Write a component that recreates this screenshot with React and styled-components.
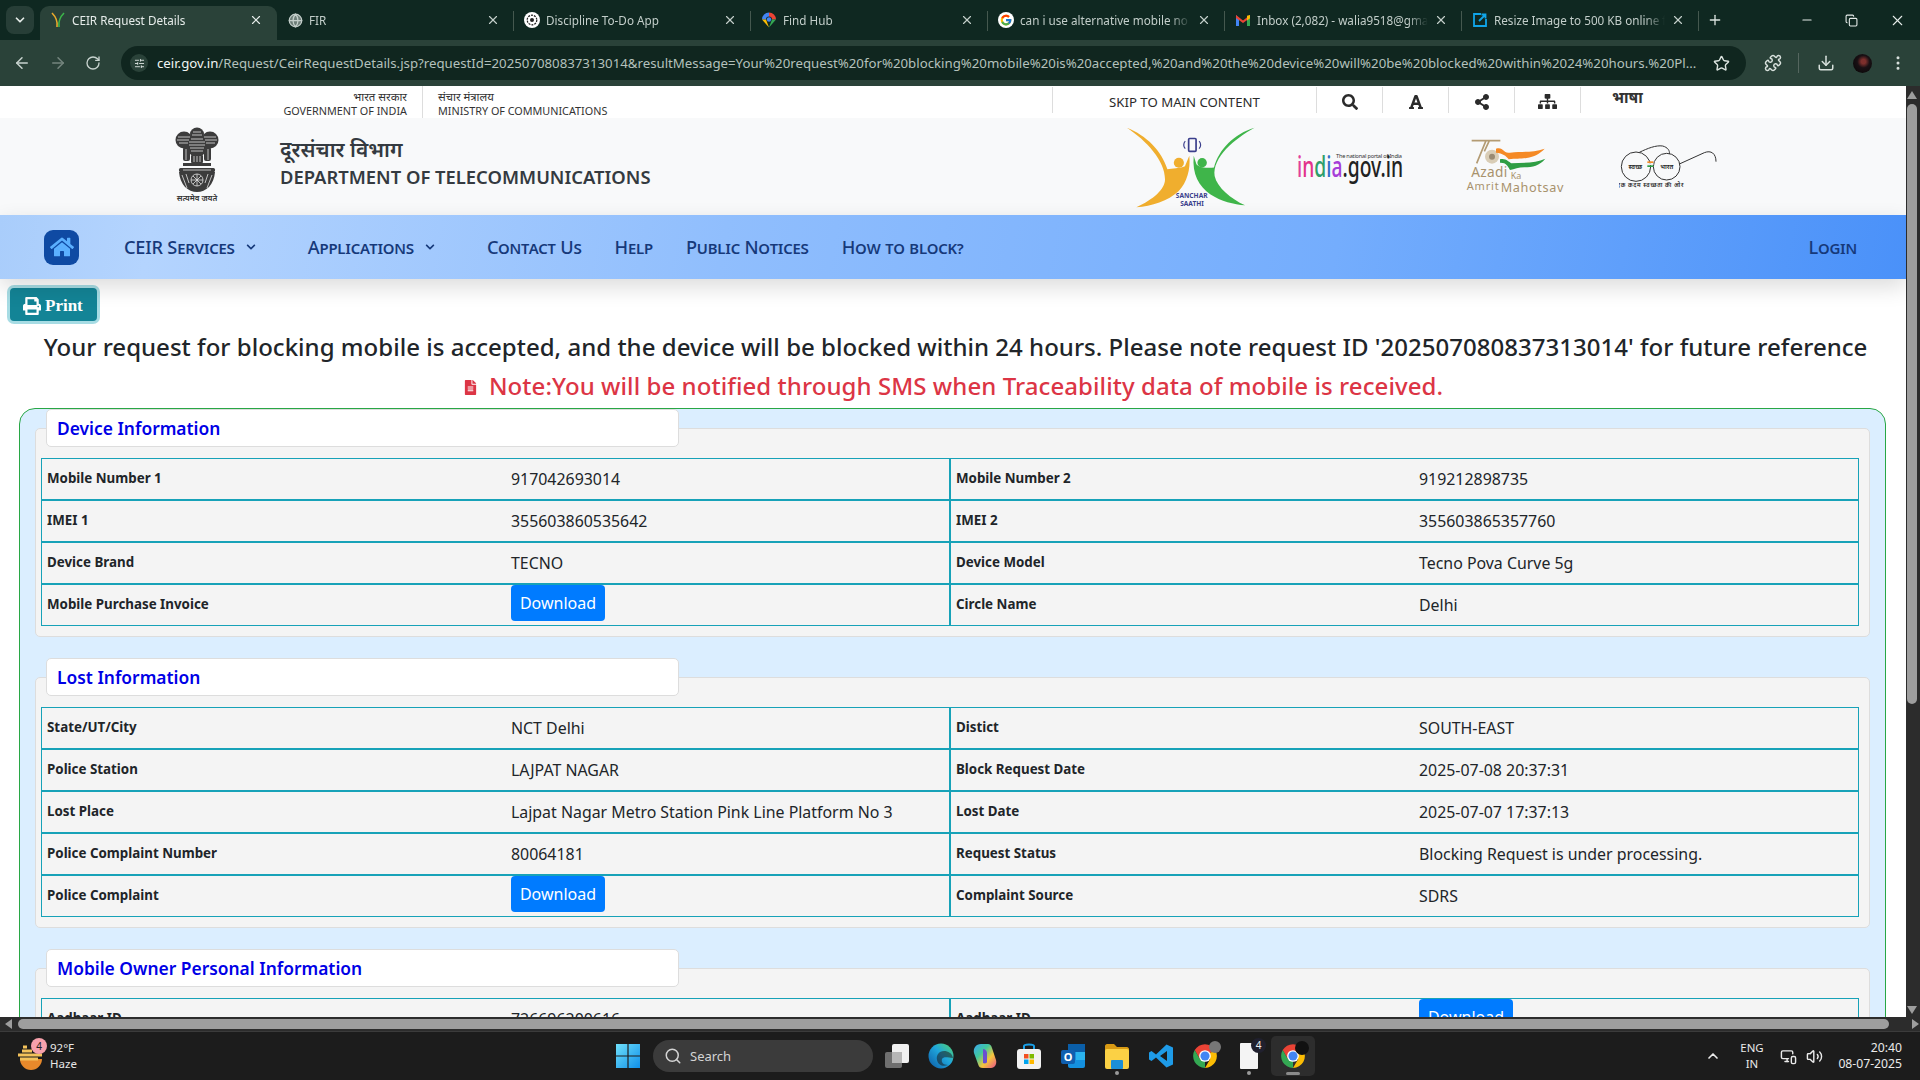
import React from "react";
import styled, { createGlobalStyle } from "styled-components";
import { FaHome, FaPrint, FaFileAlt, FaSearch, FaFont, FaShareAlt, FaSitemap, FaChevronDown } from "react-icons/fa";
import { ArrowLeft, ArrowRight, RotateCw, Globe, X, Plus, Minus, Copy, Star, Puzzle, Download as DownloadIcon, EllipsisVertical, ChevronDown, SlidersHorizontal, Search, ChevronUp, Volume2, MonitorSmartphone } from "lucide-react";

const UI = `"Noto Sans", "Open Sans", sans-serif`;
const HI = `"Noto Sans", "Noto Sans Devanagari", "Lohit Devanagari", "Open Sans", sans-serif`;

const Global = createGlobalStyle`
  html, body { margin: 0; padding: 0; height: 100%; overflow: hidden; background: #fff; }
  #root { height: 1080px; }
  * { box-sizing: border-box; }
`;

const Screen = styled.div`
  width: 1920px; height: 1080px; display: flex; flex-direction: column; overflow: hidden;
  font-family: ${UI}; color: #212529;
`;

/* ---------- browser chrome ---------- */
const TabStrip = styled.div`
  height: 40px; background: #0f2821; display: flex; align-items: flex-end; flex: none; color: #c9d3cf;
`;
const TabMenu = styled.div`
  width: 28px; height: 28px; margin: 0 6px 6px 6px; border-radius: 8px; background: #273e37;
  display: flex; align-items: center; justify-content: center; color: #e4ebe8;
`;
const Tab = styled.div`
  width: 237px; height: 34px; flex: none; display: flex; align-items: center; position: relative;
  padding: 0 14px 6px 10px; gap: 6px; font-size: 11.7px;
  background: ${p => (p.$active ? "#2a4239" : "transparent")};
  color: ${p => (p.$active ? "#e6ecea" : "#c3ceca")};
  border-radius: 9px 9px 0 0;
  &::after {
    content: ""; position: absolute; right: 0; top: 5px; height: 20px; width: 1px;
    background: ${p => (p.$active ? "transparent" : "#45584f")};
  }
`;
const FavSlot = styled.span`width: 16px; height: 16px; flex: none; display: flex; align-items: center; justify-content: center;`;
const TabTitle = styled.span`
  flex: 1; white-space: nowrap; overflow: hidden; min-width: 0;
  -webkit-mask-image: linear-gradient(to right, #000 88%, transparent 100%);
`;
const NewTab = styled.div`width: 32px; height: 34px; padding-bottom: 6px; display: flex; align-items: center; justify-content: center; color: #dbe3df;`;
const WinControls = styled.div`margin-left: auto; height: 40px; display: flex; align-items: center; color: #e6ecea; padding-right: 14px; gap: 31px;`;

const Toolbar = styled.div`
  height: 46px; background: #2a4239; flex: none; display: flex; align-items: center; color: #c8d3cf;
`;
const NavIcons = styled.div`width: 121px; padding-left: 13px; display: flex; align-items: center; gap: 18px; flex: none;`;
const Omnibox = styled.div`
  width: 1625px; height: 34px; border-radius: 17px; background: #10261f; display: flex; align-items: center;
  padding-left: 9px; flex: none;
`;
const SiteChip = styled.span`
  width: 18px; height: 18px; border-radius: 50%; background: #2a4239; display: flex; align-items: center; justify-content: center; color: #dbe3df; flex: none;
`;
const Url = styled.span`
  margin-left: 9px; font-size: 13.24px; color: #b4c1bc; white-space: nowrap; width: 1540px; overflow: hidden; flex: none;
  b { font-weight: 400; color: #f1f5f3; }
`;
const OmniStar = styled.span`margin-left: 16px; color: #dbe3df; display: flex;`;
const ToolRight = styled.div`display: flex; align-items: center; margin-left: 18px; color: #d7e0dc;`;
const ToolSep = styled.span`width: 1px; height: 20px; background: #55665f; margin: 0 18px 0 16px;`;
const Avatar = styled.span`width: 19px; height: 19px; border-radius: 50%; margin: 0 0 0 18px; background: radial-gradient(circle at 55% 40%, #7d2f2c 0 14%, #191014 40%, #050505 100%); flex: none;`;
const Kebab = styled.span`margin-left: 17px; display: flex;`;

/* ---------- page ---------- */
const Viewport = styled.div`flex: 1; min-height: 0; display: flex; background: #fff; overflow: hidden;`;
const Page = styled.div`width: 1906px; flex: none; overflow: hidden; position: relative;`;

const VBar = styled.div`width: 14px; background: #2c2c2c; display: flex; flex-direction: column; align-items: center; flex: none; padding: 5px 3px 0 1px;`;
const VThumb = styled.div`width: 10px; height: 600px; border-radius: 5px; background: #9e9e9e; margin-top: 5px;`;
const ArrowUp = styled.span`width: 0; height: 0; border-left: 5px solid transparent; border-right: 5px solid transparent; border-bottom: 8px solid #9e9e9e;`;
const ArrowDown = styled.span`width: 0; height: 0; border-left: 5px solid transparent; border-right: 5px solid transparent; border-top: 8px solid #9e9e9e; margin-top: auto; margin-bottom: 3px;`;

const HBar = styled.div`height: 15px; flex: none; background: #2c2c2c; display: flex; align-items: center; padding: 0 18px 0 5px; border-bottom: 1px solid #3b3b3b;`;
const ArrowL = styled.span`width: 0; height: 0; border-top: 5px solid transparent; border-bottom: 5px solid transparent; border-right: 7px solid #9e9e9e; margin-right: 6px; flex: none;`;
const ArrowR = styled.span`width: 0; height: 0; border-top: 5px solid transparent; border-bottom: 5px solid transparent; border-left: 7px solid #9e9e9e; margin-left: 23px; margin-right: -17px; flex: none;`;
const HThumb = styled.div`flex: 1; height: 10px; border-radius: 5px; background: #9e9e9e;`;

const UtilBar = styled.div`height: 32px; display: flex; justify-content: space-between; background: #fff;`;
const UtilLeft = styled.div`display: flex; padding-left: 250px;`;
const GovBlock = styled.div`
  width: ${p => p.$w}px; font-size: 10.8px; line-height: 14px; padding-top: 4px; color: #333; white-space: nowrap;
  text-align: ${p => p.$align}; padding-right: ${p => (p.$align === "right" ? 15 : 0)}px; padding-left: ${p => (p.$align === "left" ? 15 : 0)}px;
  border-right: ${p => (p.$sep ? "1px solid #ddd" : "0")};
  span { display: block; font-family: ${HI}; font-size: 11.4px; }
`;
const UtilRight = styled.div`display: flex;`;
const UtilCell = styled.div`
  width: ${p => p.$w}px; height: 26px; margin-top: 1px; border-left: 1px solid #ddd; display: flex; align-items: center;
  justify-content: center; color: #2b2b2b; font-size: 13.2px; padding-top: 3px;
`;
const LangCell = styled.div`
  width: 326px; height: 26px; margin-top: 1px; border-left: 1px solid #ddd; padding-left: 31px; font-weight: 700; font-size: 15.4px;
  line-height: 22px; color: #333; font-family: ${HI};
`;

const Header = styled.div`height: 97px; background: #f8f9fa; display: flex; align-items: flex-start; padding: 9px 185px 0 174px;`;
const Emblem = styled.svg`flex: none;`;
const TitleBlock = styled.div`margin-left: 60px; padding-top: 8px;`;
const HindiTitle = styled.div`font-family: ${HI}; font-size: 21px; line-height: 29px; font-weight: 600; color: #343a40;`;
const EngTitle = styled.div`font-size: 18.4px; line-height: 26px; font-weight: 600; color: #343a40; white-space: nowrap;`;
const Logos = styled.div`margin-left: auto; display: flex; align-items: flex-start;`;
const Logo = styled.svg`flex: none; margin-left: ${p => p.$ml || 0}px; margin-top: ${p => p.$mt || 0}px;`;

const Nav = styled.nav`
  height: 64px; display: flex; align-items: center; padding: 0 49px 0 44px; gap: 33px; position: relative;
  background: linear-gradient(100deg, #a9cdfb 0%, #b4d4fe 8%, #90befd 38%, #74adfd 70%, #4a91f9 100%);
  box-shadow: 0 8px 22px rgba(0,0,0,.14);
`;
const HomeBadge = styled.span`
  width: 35px; height: 35px; border-radius: 9px; background: #0f4aa3; color: #5bb0ff; display: flex; align-items: center; justify-content: center;
  margin-right: 12px; flex: none;
`;
const NavLink = styled.span`
  font-size: 18.2px; font-variant: small-caps; color: #16397a; font-weight: 500; white-space: nowrap; display: flex; align-items: center; gap: 11px;
  margin-right: ${p => p.$mr || 0}px; margin-left: ${p => (p.$end ? "auto" : 0)};
  letter-spacing: -.2px;
`;

const PrintRow = styled.div`padding: 9px 0 0 10px; height: 44px;`;
const PrintBtn = styled.button`
  width: 87px; height: 33px; border: 0; border-radius: 4px; background: #138496; color: #fff; box-shadow: 0 0 0 3px rgba(23,162,184,.38);
  display: flex; align-items: center; padding: 2px 0 0 13px; gap: 4px;
  font-family: "Liberation Serif", serif; font-weight: 700; font-size: 17px;
`;
const Message = styled.h4`
  margin: 0; padding: 7px 0 0 5px; text-align: center; font-size: 24px; line-height: 33px; font-weight: 500; color: #212529; white-space: nowrap; letter-spacing: 0.02px;
`;
const Note = styled.h4`
  margin: 0; padding-top: 6px; text-align: center; font-size: 24px; line-height: 33px; font-weight: 500; color: #dc3545; white-space: nowrap; letter-spacing: .07px;
  display: flex; justify-content: center; align-items: center; gap: 11px;
  svg { margin-top: 4px; }
`;
const Outer = styled.div`
  margin: 6px 20px 0 19px; border: 1px solid #28a745; border-radius: 16px; background: #dbeeff; padding: 19px 15px 40px 15px;
  & > section + section { margin-top: 40px; }
`;
const Card = styled.section`border: 1px solid #ddd; border-radius: 5px; background: #f4f4f4; padding: 0 10px 10px 5px;`;
const Legend = styled.div`
  margin: -20px 0 11px 5px; width: 633px; height: 38px; background: #fff; border: 1px solid #ddd; border-radius: 5px;
  color: #0000e6; font-size: 17.4px; font-weight: 600; padding-left: 10px; line-height: 37px;
`;
const Table = styled.div`border: 1px solid #17a2b8;`;
const Row = styled.div`
  display: grid; grid-template-columns: 464px 443px 465px 1fr; height: ${p => (p.$first ? 40 : 42)}px;
  border-top: ${p => (p.$first ? "0" : "2px solid #17a2b8")};
`;
const Label = styled.div`
  font-size: 13.35px; line-height: 20px; font-weight: 700; padding: 8.5px 0 0 5px; color: #212529;
  border-left: ${p => (p.$mid ? "2px solid #17a2b8" : "0")};
`;
const Value = styled.div`font-size: 15.9px; line-height: 24px; padding: ${p => (p.$flush ? "0" : "8px")} 0 0 5px; color: #212529; white-space: nowrap;`;
const DownloadBtn = styled.button`
  width: 94px; height: 36px; background: #007bff; color: #fff; border: 0; border-radius: 4px; font-family: ${UI}; font-size: 16px; padding: 0; display: block;
`;

/* ---------- taskbar ---------- */
const Taskbar = styled.div`height: 48px; background: #1c1c1c; display: flex; align-items: center; color: #e8e8e8; flex: none; position: relative;`;
const Weather = styled.div`width: 606px; padding-left: 18px; display: flex; align-items: center; gap: 8px; flex: none;`;
const WeatherIcon = styled.span`position: relative; width: 24px; height: 30px; display: block; flex: none;`;
const Badge = styled.span`
  position: absolute; width: ${p => p.$s || 14}px; height: ${p => p.$s || 14}px; border-radius: 50%; top: ${p => p.$t}px; right: ${p => p.$r}px;
  background: ${p => p.$bg}; color: ${p => p.$c}; font-size: 10px; line-height: ${p => p.$s || 14}px; text-align: center;
`;
const WeatherText = styled.div`font-size: 11.5px; line-height: 16px; color: #e6e6e6;`;
const Slot = styled.span`
  width: 44px; height: 40px; flex: none; display: flex; align-items: center; justify-content: center; position: relative; border-radius: 5px;
  background: ${p => (p.$active ? "#2d2d2d" : "transparent")};
  &::after {
    content: ""; position: absolute; bottom: 1px; left: 50%; transform: translateX(-50%); border-radius: 2px; background: ${p => (p.$active ? "#8a8a8a" : "#9a9a9a")};
    width: ${p => (p.$active ? 14 : p.$dot ? 4 : 0)}px; height: ${p => (p.$active ? 3 : p.$dot ? 4 : 0)}px;
  }
`;
const SearchPill = styled.div`
  width: 220px; height: 32px; border-radius: 16px; background: #3b3b3b; margin: 0 2px 0 3px; display: flex; align-items: center; gap: 8px; padding-left: 11px;
  font-size: 13px; color: #d4d4d4; flex: none;
`;
const Tray = styled.div`margin-left: auto; padding-right: 18px; display: flex; align-items: center; color: #eaeaea;`;
const Lang = styled.div`font-size: 11.4px; line-height: 16px; text-align: center; width: 30px; margin: 0 13px 0 16px;`;
const Clock = styled.div`font-size: 12.2px; line-height: 16px; text-align: right; margin-left: 11px; width: 68px; white-space: nowrap;`;
const TrayIcon = styled.span`display: flex; margin-left: ${p => p.$ml || 0}px;`;

/* ---------- drawings ---------- */
const ChromeLogo = ({ s = 16 }) => (
  <svg width={s} height={s} viewBox="0 0 24 24">
    <path d="M12 12L21.5 6.5A11 11 0 0 0 2.5 6.5L7.2 14.8Z" fill="#ea4335" />
    <path d="M12 12L21.5 6.5A11 11 0 0 1 12 23L16.8 14.8Z" fill="#fbbc04" />
    <path d="M12 12L12 23A11 11 0 0 1 2.5 6.5L7.2 14.8Z" fill="#34a853" />
    <circle cx="12" cy="12" r="5.4" fill="#fff" /><circle cx="12" cy="12" r="4.2" fill="#4285f4" />
  </svg>
);
const GoogleLogo = () => (
  <svg width="16" height="16" viewBox="0 0 48 48">
    <circle cx="24" cy="24" r="24" fill="#fff" />
    <g transform="translate(5 5) scale(.8)">
      <path fill="#FFC107" d="M43.611 20.083H42V20H24v8h11.303c-1.649 4.657-6.08 8-11.303 8-6.627 0-12-5.373-12-12s5.373-12 12-12c3.059 0 5.842 1.154 7.961 3.039l5.657-5.657C34.046 6.053 29.268 4 24 4 12.955 4 4 12.955 4 24s8.955 20 20 20 20-8.955 20-20c0-1.341-.138-2.65-.389-3.917z" />
      <path fill="#FF3D00" d="M6.306 14.691l6.571 4.819C14.655 15.108 18.961 12 24 12c3.059 0 5.842 1.154 7.961 3.039l5.657-5.657C34.046 6.053 29.268 4 24 4 16.318 4 9.656 8.337 6.306 14.691z" />
      <path fill="#4CAF50" d="M24 44c5.166 0 9.86-1.977 13.409-5.192l-6.19-5.238C29.211 35.091 26.715 36 24 36c-5.202 0-9.619-3.317-11.283-7.946l-6.522 5.025C9.505 39.556 16.227 44 24 44z" />
      <path fill="#1976D2" d="M43.611 20.083H42V20H24v8h11.303c-.792 2.237-2.231 4.166-4.087 5.571l6.19 5.238C36.971 39.205 44 34 44 24c0-1.341-.138-2.65-.389-3.917z" />
    </g>
  </svg>
);
const CeirFav = () => (
  <svg width="16" height="16" viewBox="0 0 16 16" fill="none">
    <path d="M2 1C5 4 8 8 7 15" stroke="#e9a92c" strokeWidth="1.6" />
    <path d="M14 1C11 4 8 8 9 15" stroke="#3cb54a" strokeWidth="1.6" />
  </svg>
);
const DisciplineFav = () => (
  <svg width="16" height="16" viewBox="0 0 16 16">
    <circle cx="8" cy="8" r="8" fill="#fff" />
    <circle cx="8" cy="8" r="4.8" fill="none" stroke="#222" strokeWidth="1.2" strokeDasharray="2 1" />
    <circle cx="8" cy="8" r="2" fill="#222" />
  </svg>
);
const GmailFav = () => (
  <svg width="16" height="16" viewBox="0 0 16 16">
    <path d="M1 3V14H4V6.5Z" fill="#4285f4" /><path d="M15 3V14H12V6.5Z" fill="#34a853" />
    <path d="M1 3L8 8.5L15 3V6L8 11L1 6Z" fill="#ea4335" /><path d="M12 3.8L15 3V6.2L12 8.4Z" fill="#fbbc04" />
  </svg>
);
const ResizeFav = () => (
  <svg width="16" height="16" viewBox="0 0 16 16" fill="none" stroke="#10a5e8" strokeWidth="1.8">
    <path d="M9 2H2V14H14V7" /><path d="M7 9L13 3M9.5 2.5H13.5V6.5" />
  </svg>
);
const FindHubFav = () => (
  <svg width="16" height="16" viewBox="0 0 16 16">
    <path d="M8 0.5A7 7 0 0 1 15 7.5H11A3 3 0 0 0 8 4.5Z" fill="#ea4335" />
    <path d="M1 7.5A7 7 0 0 1 8 0.5V4.5A3 3 0 0 0 5 7.5Z" fill="#4285f4" />
    <path d="M1 7.5H5L8 15.5Z" fill="#fbbc04" /><path d="M15 7.5H11L8 15.5Z" fill="#34a853" />
    <circle cx="8" cy="7.5" r="2.2" fill="#4285f4" />
  </svg>
);

const LionEmblem = () => (
  <Emblem width="46" height="76" viewBox="0 0 46 76">
    <g fill="#3c3c3c">
      <ellipse cx="23" cy="7" rx="7" ry="6.5" /><ellipse cx="10" cy="13" rx="8.5" ry="8.5" /><ellipse cx="36" cy="13" rx="8.5" ry="8.5" />
      <ellipse cx="23" cy="19" rx="10" ry="11" /><rect x="9" y="20" width="7" height="14" rx="2" /><rect x="30" y="20" width="7" height="14" rx="2" />
      <rect x="17" y="28" width="12" height="8" rx="1" />
      <rect x="9" y="36" width="28" height="3" /><rect x="5" y="41" width="36" height="4" rx="1.5" />
      <path d="M5 45C6 58 14 65 23 65C32 65 40 58 41 45Z" />
    </g>
    <g fill="none" stroke="#fff" strokeWidth=".8" opacity=".85">
      <path d="M4 10H16M3 13H15M5 16H14M30 10H42M31 13H43M32 16H41M17 12H29M15 15H31M15 18H31M16 21H30M17 24H29M19 5H27M18 8H28" />
      <path d="M12 22V33M34 22V33M20 29V35M26 29V35M23 29V35" />
      <circle cx="23" cy="53" r="6" /><path d="M23 47V59M17 53H29M19 49L27 57M27 49L19 57" />
      <path d="M8 48L13 61M38 48L33 61M12 47L15 56M34 47L31 56M9 43H37" />
    </g>
    <text x="23" y="74" textAnchor="middle" fontFamily={HI} fontSize="8" fontWeight="600" fill="#333">सत्यमेव जयते</text>
  </Emblem>
);

const SancharLogo = () => (
  <Logo width="129" height="81" viewBox="110 50 381 240">
    <path fill="#f0ae2e" d="M112 52C170 75 215 120 232 175C245 172 270 172 284 166L297 135C301 175 290 215 265 240C235 268 185 285 140 288C190 265 225 235 225 205C225 150 170 90 112 52Z" />
    <circle cx="266" cy="156" r="15" fill="#f0ae2e" />
    <path fill="#3fb54a" d="M490 52C430 70 385 115 370 170C358 172 328 172 318 160L310 135C305 190 325 225 360 250C390 270 430 280 462 282C420 262 380 230 372 195C365 140 430 85 490 52Z" />
    <circle cx="335" cy="156" r="14" fill="#3fb54a" />
    <rect x="295" y="84" width="22" height="38" rx="3" fill="none" stroke="#3b3f8c" strokeWidth="5" />
    <path d="M285 92C279 98 279 108 285 114M326 92C332 98 332 108 326 114" fill="none" stroke="#3b3f8c" strokeWidth="3.5" />
    <text x="304" y="260" textAnchor="middle" fontFamily={UI} fontWeight="700" fontSize="21" fill="#3b3f8c" textLength="94" lengthAdjust="spacingAndGlyphs">SANCHAR</text>
    <text x="305" y="285" textAnchor="middle" fontFamily={UI} fontWeight="700" fontSize="21" fill="#3b3f8c" textLength="70" lengthAdjust="spacingAndGlyphs">SAATHI</text>
  </Logo>
);
const IndiaLogo = () => (
  <Logo $ml={41} $mt={24} width="109" height="36" viewBox="0 0 109 36">
    <text x="40" y="7" fontFamily={UI} fontSize="5.6" fill="#333" textLength="66">The national portal of India</text>
    <text x="1" y="26" fontFamily={UI} fontSize="29" fontWeight="500" textLength="106" lengthAdjust="spacingAndGlyphs">
      <tspan fill="#e23f9c">i</tspan><tspan fill="#e2338a">n</tspan><tspan fill="#2e9e6b">d</tspan><tspan fill="#2f6fc6">i</tspan><tspan fill="#a63fd8">a</tspan><tspan fill="#222">.gov.in</tspan>
    </text>
  </Logo>
);
const AzadiLogo = () => (
  <Logo $ml={61} $mt={12} width="100" height="56" viewBox="80 55 300 168">
    <path d="M97 60H140L112 128M130 60H183M150 60L135 92" fill="none" stroke="#b39b73" strokeWidth="5" />
    <circle cx="158" cy="108" r="21" fill="#d9cdb6" /><circle cx="158" cy="108" r="9" fill="#9a8b73" />
    <path d="M170 84C195 78 190 100 212 96C250 92 280 96 316 84C300 100 285 108 262 112C240 116 230 112 208 116C200 105 190 98 170 96Z" fill="#f58a25" />
    <path d="M182 116C200 112 208 124 216 128C250 126 290 128 318 114C300 135 280 140 255 140C238 140 225 146 212 148C205 135 200 125 182 126Z" fill="#2f9e44" />
    <g fontFamily={UI} fill="#a8926c">
      <text x="96" y="168" fontSize="41" textLength="108">Azadi</text><text x="214" y="176" fontSize="27">Ka</text>
      <text x="82" y="207" fontSize="33" textLength="96">Amrit</text><text x="184" y="215" fontSize="38" textLength="188">Mahotsav</text>
    </g>
  </Logo>
);
const SwachhLogo = () => (
  <Logo $ml={53} $mt={17} width="102" height="48" viewBox="540 72 304 144">
    <g fill="none" stroke="#333" strokeWidth="3">
      <circle cx="590" cy="140" r="44" /><circle cx="682" cy="140" r="40" />
      <path d="M600 97C625 85 650 75 670 78C685 82 692 92 690 102M720 132L795 98C815 90 830 100 830 125" />
    </g>
    <rect x="624" y="124" width="18" height="5" fill="#f58a25" /><rect x="624" y="130" width="18" height="5" fill="#eee" /><rect x="624" y="136" width="18" height="5" fill="#2f9e44" />
    <g fontFamily={HI} fill="#222" fontWeight="600">
      <text x="588" y="148" fontSize="19" textAnchor="middle">स्वच्छ</text>
      <text x="682" y="148" fontSize="19" textAnchor="middle">भारत</text>
      <text x="632" y="202" fontSize="17" textAnchor="middle" textLength="200">एक कदम स्वच्छता की ओर</text>
    </g>
  </Logo>
);

const WinLogo = () => (
  <svg width="24" height="24" viewBox="0 0 24 24">
    <defs><linearGradient id="wg" x1="0" y1="0" x2="1" y2="1"><stop offset="0" stopColor="#6fe0fb" /><stop offset="1" stopColor="#0f8fe8" /></linearGradient></defs>
    <path d="M0 0H11.4V11.4H0ZM12.6 0H24V11.4H12.6ZM0 12.6H11.4V24H0ZM12.6 12.6H24V24H12.6Z" fill="url(#wg)" />
  </svg>
);
const TaskView = () => (
  <svg width="26" height="26" viewBox="0 0 26 26">
    <rect x="1" y="9" width="17" height="16" rx="2" fill="#6f6f6f" /><rect x="8" y="1" width="17" height="19" rx="2" fill="#f0f0f0" /><rect x="8" y="9" width="10" height="11" fill="#b6b6b6" />
  </svg>
);
const EdgeLogo = () => (
  <svg width="26" height="26" viewBox="0 0 26 26">
    <defs><linearGradient id="eg" x1="0" y1="1" x2="1" y2="0"><stop offset="0" stopColor="#0c59a4" /><stop offset=".55" stopColor="#1fa6dc" /><stop offset="1" stopColor="#54d469" /></linearGradient></defs>
    <circle cx="13" cy="13" r="12.5" fill="url(#eg)" />
    <path d="M25 15C24 10 20 8 16 8C11 8 8 12 9 17C10 22 15 24 20 22C15 22 13 19 14 16C15 14 18 14 25 15Z" fill="#1c1c1c" opacity=".55" />
  </svg>
);
const CopilotLogo = () => (
  <svg width="24" height="26" viewBox="0 0 24 26">
    <defs><linearGradient id="cg" x1="0" y1="0" x2="1" y2="1"><stop offset="0" stopColor="#3da5f0" /><stop offset=".35" stopColor="#40c99e" /><stop offset=".65" stopColor="#f6c63c" /><stop offset="1" stopColor="#e8508a" /></linearGradient></defs>
    <path d="M8 1H15C17 1 18 2 19 5L23 17C24 21 22 25 18 25H10C7 25 6 24 5 21L1 10C0 5 3 1 8 1Z" fill="url(#cg)" />
    <path d="M10 6C12 6 14 8 14 10L14 19C14 20 12 21 10 20Z" fill="#6a4fd0" />
  </svg>
);
const StoreLogo = () => (
  <svg width="24" height="26" viewBox="0 0 24 26">
    <path d="M7 7V3C7 1 17 1 17 3V7" fill="none" stroke="#1aa0e8" strokeWidth="2" />
    <rect x="0" y="6" width="24" height="20" rx="3" fill="#f2f2f2" />
    <rect x="7" y="11" width="4.5" height="4.5" fill="#f25022" /><rect x="12.5" y="11" width="4.5" height="4.5" fill="#7fba00" />
    <rect x="7" y="16.5" width="4.5" height="4.5" fill="#00a4ef" /><rect x="12.5" y="16.5" width="4.5" height="4.5" fill="#ffb900" />
  </svg>
);
const OutlookLogo = () => (
  <svg width="26" height="26" viewBox="0 0 26 26">
    <rect x="8" y="1" width="17" height="24" rx="2" fill="#1490df" /><rect x="8" y="1" width="17" height="8" fill="#0a5ea8" /><rect x="16" y="9" width="9" height="8" fill="#2ab3ee" />
    <rect x="1" y="7" width="14" height="14" rx="2" fill="#0f5fb0" />
    <text x="8" y="18" textAnchor="middle" fontFamily={UI} fontWeight="700" fontSize="11" fill="#fff">O</text>
  </svg>
);
const FolderLogo = () => (
  <svg width="24" height="26" viewBox="0 0 24 26">
    <path d="M0 3C0 2 1 1 2 1H9L12 4H22C23 4 24 5 24 6V9H0Z" fill="#d99a14" />
    <rect x="0" y="6" width="24" height="20" rx="2" fill="#fbd145" />
    <rect x="6" y="17" width="12" height="9" rx="1" fill="#1b8fd6" />
  </svg>
);
const VsCodeLogo = () => (
  <svg width="24" height="24" viewBox="0 0 24 24">
    <path d="M17.5 0.5L24 3.5V20.5L17.5 23.5L7 13.5L2.5 17L0 15.5V8.5L2.5 7L7 10.5ZM18 7L11 12L18 17Z" fill="#1e9be8" fillRule="evenodd" />
  </svg>
);
const BlankDoc = () => <svg width="18" height="26" viewBox="0 0 18 26"><rect width="18" height="26" rx="1" fill="#f4f4f4" /></svg>;

const StackedChrome = ({ badge }) => (
  <>
    <ChromeLogo s={26} />
    <Badge $t={5} $r={6} $s={badge === "g" ? 12 : 14} $bg={badge === "g" ? "#777" : "#111"} $c="#ddd" />
  </>
);

const tabs = [
  { title: "CEIR Request Details", icon: <CeirFav />, active: true },
  { title: "FIR", icon: <Globe size={15} color="#c3ceca" fill="#6c7d77" /> },
  { title: "Discipline To-Do App", icon: <DisciplineFav /> },
  { title: "Find Hub", icon: <FindHubFav /> },
  { title: "can i use alternative mobile no for blocking", icon: <GoogleLogo /> },
  { title: "Inbox (2,082) - walia9518@gmail.com", icon: <GmailFav /> },
  { title: "Resize Image to 500 KB online free", icon: <ResizeFav /> },
];

const sections = [
  {
    title: "Device Information",
    rows: [
      ["Mobile Number 1", "917042693014", "Mobile Number 2", "919212898735"],
      ["IMEI 1", "355603860535642", "IMEI 2", "355603865357760"],
      ["Device Brand", "TECNO", "Device Model", "Tecno Pova Curve 5g"],
      ["Mobile Purchase Invoice", null, "Circle Name", "Delhi"],
    ],
  },
  {
    title: "Lost Information",
    rows: [
      ["State/UT/City", "NCT Delhi", "Distict", "SOUTH-EAST"],
      ["Police Station", "LAJPAT NAGAR", "Block Request Date", "2025-07-08 20:37:31"],
      ["Lost Place", "Lajpat Nagar Metro Station Pink Line Platform No 3", "Lost Date", "2025-07-07 17:37:13"],
      ["Police Complaint Number", "80064181", "Request Status", "Blocking Request is under processing."],
      ["Police Complaint", null, "Complaint Source", "SDRS"],
    ],
  },
  {
    title: "Mobile Owner Personal Information",
    rows: [["Aadhaar ID", "726696200616", "Aadhaar ID", null]],
  },
];

const Cell = ({ v }) =>
  v === null ? (
    <Value $flush><DownloadBtn>Download</DownloadBtn></Value>
  ) : (
    <Value>{v}</Value>
  );

export default function App() {
  return (
    <Screen>
      <Global />
      <TabStrip>
        <TabMenu><ChevronDown size={14} strokeWidth={3} /></TabMenu>
        {tabs.map(t => (
          <Tab key={t.title} $active={t.active}>
            <FavSlot>{t.icon}</FavSlot>
            <TabTitle>{t.title}</TabTitle>
            <X size={14} strokeWidth={2} />
          </Tab>
        ))}
        <NewTab><Plus size={16} /></NewTab>
        <WinControls>
          <Minus size={14} /><Copy size={13} /><X size={17} strokeWidth={1.5} />
        </WinControls>
      </TabStrip>
      <Toolbar>
        <NavIcons>
          <ArrowLeft size={18} /><ArrowRight size={18} color="#74857e" /><RotateCw size={16} />
        </NavIcons>
        <Omnibox>
          <SiteChip><SlidersHorizontal size={11} /></SiteChip>
          <Url><b>ceir.gov.in</b>/Request/CeirRequestDetails.jsp?requestId=202507080837313014&amp;resultMessage=Your%20request%20for%20blocking%20mobile%20is%20accepted,%20and%20the%20device%20will%20be%20blocked%20within%2024%20hours.%20Pl...</Url>
          <OmniStar><Star size={17} /></OmniStar>
        </Omnibox>
        <ToolRight>
          <Puzzle size={18} />
          <ToolSep />
          <DownloadIcon size={18} />
          <Avatar />
          <Kebab><EllipsisVertical size={18} /></Kebab>
        </ToolRight>
      </Toolbar>

      <Viewport>
        <Page>
          <UtilBar>
            <UtilLeft>
              <GovBlock $w={173} $align="right" $sep><span>भारत सरकार</span>GOVERNMENT OF INDIA</GovBlock>
              <GovBlock $w={220} $align="left"><span>संचार मंत्रालय</span>MINISTRY OF COMMUNICATIONS</GovBlock>
            </UtilLeft>
            <UtilRight>
              <UtilCell $w={264}>SKIP TO MAIN CONTENT</UtilCell>
              <UtilCell $w={66}><FaSearch size={16} /></UtilCell>
              <UtilCell $w={66}><FaFont size={16} /></UtilCell>
              <UtilCell $w={66}><FaShareAlt size={16} /></UtilCell>
              <UtilCell $w={66}><FaSitemap size={19} /></UtilCell>
              <LangCell>भाषा</LangCell>
            </UtilRight>
          </UtilBar>

          <Header>
            <LionEmblem />
            <TitleBlock>
              <HindiTitle>दूरसंचार विभाग</HindiTitle>
              <EngTitle>DEPARTMENT OF TELECOMMUNICATIONS</EngTitle>
            </TitleBlock>
            <Logos>
              <SancharLogo /><IndiaLogo /><AzadiLogo /><SwachhLogo />
            </Logos>
          </Header>

          <Nav>
            <HomeBadge><FaHome size={24} /></HomeBadge>
            <NavLink $mr={19}>CEIR Services <FaChevronDown size={10} /></NavLink>
            <NavLink $mr={19}>Applications <FaChevronDown size={10} /></NavLink>
            <NavLink>Contact Us</NavLink>
            <NavLink>Help</NavLink>
            <NavLink>Public Notices</NavLink>
            <NavLink>How to block?</NavLink>
            <NavLink $end>Login</NavLink>
          </Nav>

          <PrintRow>
            <PrintBtn><FaPrint size={18} />Print</PrintBtn>
          </PrintRow>
          <Message>Your request for blocking mobile is accepted, and the device will be blocked within 24 hours. Please note request ID '202507080837313014' for future reference</Message>
          <Note><FaFileAlt size={15} />Note:You will be notified through SMS when Traceability data of mobile is received.</Note>

          <Outer>
            {sections.map(s => (
              <Card key={s.title}>
                <Legend>{s.title}</Legend>
                <Table>
                  {s.rows.map((r, i) => (
                    <Row key={r[0]} $first={i === 0}>
                      <Label>{r[0]}</Label>
                      <Cell v={r[1]} />
                      <Label $mid>{r[2]}</Label>
                      <Cell v={r[3]} />
                    </Row>
                  ))}
                </Table>
              </Card>
            ))}
          </Outer>
        </Page>
        <VBar>
          <ArrowUp />
          <VThumb />
          <ArrowDown />
        </VBar>
      </Viewport>

      <HBar>
        <ArrowL /><HThumb /><ArrowR />
      </HBar>

      <Taskbar>
        <Weather>
          <WeatherIcon>
            <svg width="24" height="30" viewBox="0 0 24 30">
              <path d="M2 18H24A11 11 0 0 1 2 18Z" fill="#e8892b" />
              <path d="M4 10H14M0 14H24M2 18H20M5 6H9" stroke="#f3c25b" strokeWidth="3" />
            </svg>
            <Badge $t={-3} $r={-5} $s={16} $bg="#f7a1ac" $c="#222">4</Badge>
          </WeatherIcon>
          <WeatherText>92°F<br />Haze</WeatherText>
        </Weather>
        <Slot><WinLogo /></Slot>
        <SearchPill><Search size={18} />Search</SearchPill>
        <Slot><TaskView /></Slot>
        <Slot><EdgeLogo /></Slot>
        <Slot><CopilotLogo /></Slot>
        <Slot><StoreLogo /></Slot>
        <Slot><OutlookLogo /></Slot>
        <Slot $dot><FolderLogo /></Slot>
        <Slot><VsCodeLogo /></Slot>
        <Slot><StackedChrome badge="g" /></Slot>
        <Slot $dot><BlankDoc /><Badge $t={2} $r={5} $s={15} $bg="#20202e" $c="#eee">4</Badge></Slot>
        <Slot $active><StackedChrome /></Slot>
        <Tray>
          <ChevronUp size={16} strokeWidth={2.5} />
          <Lang>ENG<br />IN</Lang>
          <TrayIcon><MonitorSmartphone size={17} /></TrayIcon>
          <TrayIcon $ml={9}><Volume2 size={17} /></TrayIcon>
          <Clock>20:40<br />08-07-2025</Clock>
        </Tray>
      </Taskbar>
    </Screen>
  );
}
